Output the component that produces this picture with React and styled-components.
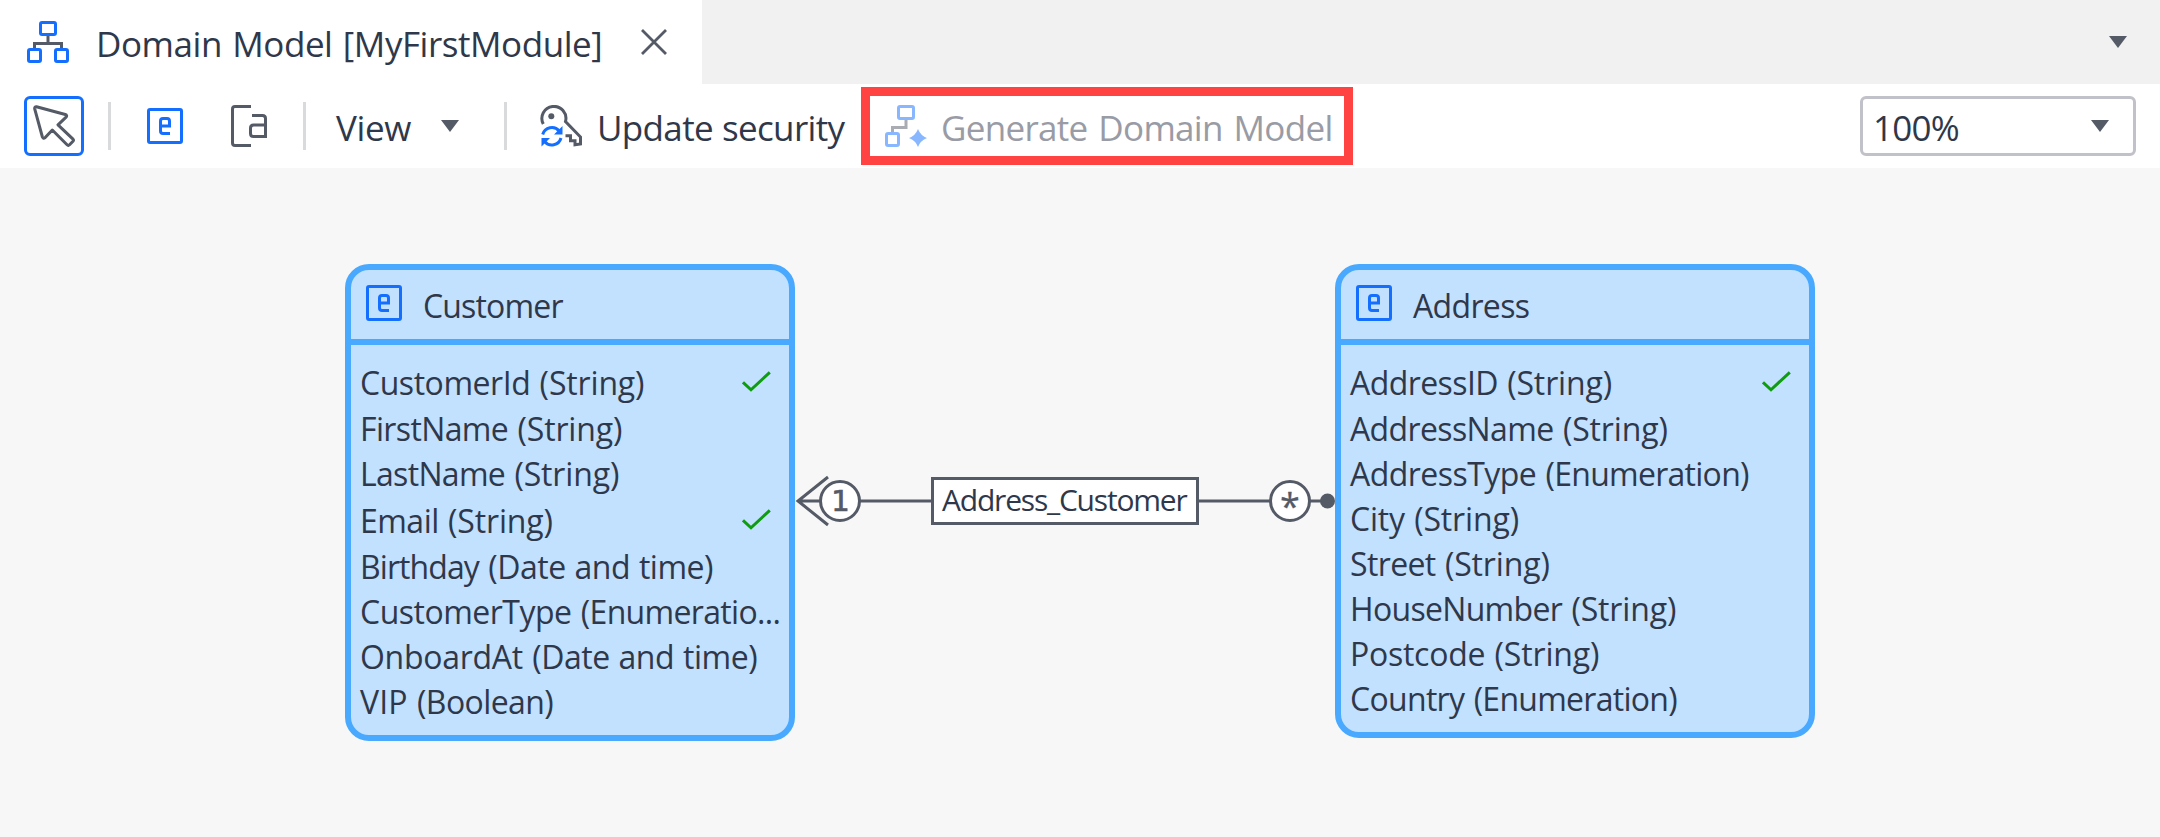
import React from "react";
import styled, { createGlobalStyle } from "styled-components";

const BLUE = "#146fff";
const INK = "#2f384a";
const GRAY = "#545a66";

const Global = createGlobalStyle`
  body { margin: 0; background: #f7f7f7; }
  * { box-sizing: border-box; }
`;

const Page = styled.div`
  display: flex;
  flex-direction: column;
  width: 2160px;
  height: 837px;
  overflow: hidden;
  font-family: "Open Sans", "Noto Sans", sans-serif;
  color: ${INK};
`;

const TabStrip = styled.header`
  display: flex;
  justify-content: space-between;
  align-items: center;
  height: 84px;
  padding-right: 33px;
  background: #f1f1f1;
`;

const Tab = styled.div`
  display: flex;
  align-items: center;
  width: 702px;
  height: 84px;
  padding-left: 27px;
  background: #fff;
`;

const Label = styled.span`
  font-size: 35px;
  line-height: 48px;
  white-space: nowrap;
  letter-spacing: ${(p) => p.$tracking || 0}px;
  word-spacing: ${(p) => p.$wordGap || 0}px;
`;

const TabTitle = styled(Label)`
  width: 545px;
  margin: 3px 0 0 27px;
`;

const Toolbar = styled.div`
  display: flex;
  align-items: center;
  height: 84px;
  padding: 0 24px;
  background: #fff;
`;

const PointerButton = styled.button`
  display: flex;
  padding: 6px;
  width: 60px;
  height: 60px;
  border: 3px solid ${BLUE};
  border-radius: 6px;
  background: #fff;
`;

const Divider = styled.i`
  width: 3px;
  height: 48px;
  margin-left: ${(p) => p.$gap}px;
  background: #d9dadc;
`;

const ToolButton = styled.button`
  display: flex;
  padding: 0;
  border: 0;
  background: none;
  margin-left: ${(p) => p.$gap}px;
`;

const TextButton = styled.button`
  display: flex;
  align-items: center;
  padding: 0;
  border: 0;
  background: none;
  font-family: inherit;
  color: ${(p) => (p.disabled ? "#999ba5" : INK)};
  margin-left: ${(p) => p.$gap}px;
`;

const ButtonLabel = styled(Label)`
  margin: 3px 0 0 ${(p) => p.$gap || 0}px;
  width: ${(p) => p.$width}px;
  text-align: left;
`;

const Highlight = styled.div`
  display: flex;
  align-items: center;
  width: 492px;
  height: 78px;
  margin-left: 15px;
  border: 9px solid #ff4343;
`;

const ZoomSelect = styled.div`
  display: flex;
  align-items: center;
  justify-content: space-between;
  width: 276px;
  height: 60px;
  margin-left: auto;
  padding: 0 24px 0 10px;
  border: 3px solid #c1c1c9;
  border-radius: 6px;
`;

const Canvas = styled.main`
  position: relative;
  flex: 1;
  background: #f7f7f7;
`;

const EntityBox = styled.section`
  position: absolute;
  left: ${(p) => p.$x}px;
  top: ${(p) => p.$y}px;
  width: ${(p) => p.$width}px;
  border: 6px solid #48a9ff;
  border-radius: 24px;
  background: #c2e1ff;
`;

const EntityHeader = styled.div`
  display: flex;
  height: 75px;
  padding: 15px 0 0 15px;
  border-bottom: 6px solid #48a9ff;
`;

const EntityTitle = styled.span`
  margin: -1px 0 0 21px;
  font-size: 32px;
  line-height: 44px;
  letter-spacing: ${(p) => p.$tracking}px;
`;

const AttributeList = styled.div`
  padding: 12px 18px 12px 9px;
`;

const Attribute = styled.div`
  display: flex;
  align-items: center;
  justify-content: space-between;
  height: ${(p) => (p.$validated ? 48 : 45)}px;
  font-size: 32px;
  line-height: 44px;
  white-space: nowrap;
  word-spacing: 1px;
`;

const AttributeText = styled.span`
  margin-top: 3px;
`;

const Tracked = styled.span`
  letter-spacing: ${(p) => p.$tracking}px;
`;

const CheckMark = styled.svg`
  margin-top: 1px;
`;

const Association = styled.div`
  position: absolute;
  left: 795px;
  top: 303px;
  width: 540px;
  height: 60px;
`;

const AssociationLine = styled.svg`
  display: block;
`;

const AssociationName = styled.div`
  position: absolute;
  left: 136px;
  top: 6px;
  width: 268px;
  height: 48px;
  padding-left: 8px;
  border: 3px solid ${GRAY};
  background: #fff;
  font-size: 30px;
  line-height: 39px;
  letter-spacing: -1.2px;
`;

const Multiplicity = styled.div`
  position: absolute;
  left: ${(p) => p.$x}px;
  top: 9px;
  width: 42px;
  height: 42px;
  border: 3px solid ${GRAY};
  border-radius: 50%;
  background: #fff;
  color: ${GRAY};
  font-family: "DejaVu Sans", sans-serif;
  font-size: 29px;
  line-height: 36px;
  text-align: center;
  text-indent: 1px;
  -webkit-text-stroke: 0.7px ${GRAY};
`;

const ManyMultiplicity = styled(Multiplicity)`
  font-family: "Open Sans", sans-serif;
  font-size: 36px;
  line-height: 46px;
  text-indent: 0;
  -webkit-text-stroke: 0.3px ${GRAY};
`;

const ModelIcon = () => (
  <svg width="42" height="42" viewBox="0 0 42 42" fill="none" strokeWidth="3">
    <path d="M21 15v6M7.5 27v-4.5h27V27" stroke={GRAY} />
    <g stroke={BLUE}>
      <rect x="13.5" y="1.5" width="15" height="12" rx="1.5" />
      <rect x="1.5" y="28.5" width="12" height="12" rx="1.5" />
      <rect x="28.5" y="28.5" width="12" height="12" rx="1.5" />
    </g>
  </svg>
);

const GenerateIcon = () => (
  <svg width="42" height="42" viewBox="0 0 42 42" fill="none" strokeWidth="3">
    <path d="M21 15v7.5H7.5V27" stroke="#a9acb2" />
    <g stroke="#89b7ff">
      <rect x="13.5" y="1.5" width="15" height="12" rx="1.5" />
      <rect x="1.5" y="28.5" width="12" height="12" rx="1.5" />
    </g>
    <path d="M33 24q2.500 6.500 9 9q-6.500 2.500-9 9q-2.500-6.500-9-9q6.500-2.500 9-9z" fill="#89b7ff" />
  </svg>
);

const CloseIcon = () => (
  <svg width="26" height="26" viewBox="0 0 26 26" stroke={GRAY} strokeWidth="2.8">
    <path d="M1 1l24 24M25 1L1 25" />
  </svg>
);

const Caret = () => (
  <svg width="18" height="12" viewBox="0 0 18 12">
    <path d="M0 0h18L9 12z" fill={GRAY} />
  </svg>
);

const PointerIcon = () => (
  <svg width="42" height="42" viewBox="0 0 42 42" fill="none" stroke={GRAY} strokeWidth="3" strokeLinejoin="round">
    <path d="M3.500 1.800L32.300 9.500q2.200.8.800 2.700L25 19.800L40 34.200q.9 1 0 2L36.300 40q-1 .9-2 0L19.300 25L12 32.800q-1.800 1.200-2.600-.8L1.700 3.800q-.3-2.200 1.800-2z" />
  </svg>
);

const EntityIcon = () => (
  <svg width="36" height="36" viewBox="0 0 36 36" fill="none" stroke={BLUE} strokeWidth="3">
    <rect x="1.500" y="1.500" width="33" height="33" rx="1.500" />
    <path d="M23 25.500h-7q-2.500 0-2.500-2.500V13q0-2.500 2.500-2.500h4q2.500 0 2.500 2.500v5H13.500" />
  </svg>
);

const AnnotationIcon = () => (
  <svg width="36" height="42" viewBox="0 0 36 42" fill="none" stroke={GRAY} strokeWidth="3">
    <path d="M20 1.500H4Q1.500 1.500 1.500 4v34q0 2.500 2.500 2.500h16" />
    <path d="M21 10.500h10.500q3 0 3 3v18H22.500q-3 0-3-3v-5.500q0-3 3-3h12" />
  </svg>
);

const SecurityIcon = () => (
  <svg width="42" height="42" viewBox="0 0 42 42" fill="none" strokeWidth="3">
    <path d="M3.300 19A12 12 0 1 1 25.500 16.500L40.500 32v7l-5.500.8v-4h-4.500v-5H25.500" stroke={GRAY} />
    <circle cx="11.300" cy="11.300" r="3" fill={GRAY} />
    <path d="M2.700 29.500a9.500 9.500 0 0 1 16.500-3.500M21 33a9.500 9.500 0 0 1-16.500 3.500" stroke={BLUE} />
    <path d="M22.500 21v8.500H14zM1.500 41.500V33H10z" fill={BLUE} />
  </svg>
);

const Check = () => (
  <CheckMark width="29" height="21" viewBox="0 0 29 21" fill="none" stroke="#109c10" strokeWidth="3">
    <path d="M1 11.300l8 7.500L27.800 1.300" />
  </CheckMark>
);

const STRING = { text: "(String)", tracking: -0.15 };
const ENUMERATION = { text: "(Enumeration)", tracking: -0.73 };
const DATE_TIME = { text: "(Date and time)", tracking: -0.47 };

const CUSTOMER = [
  { name: "CustomerId", tracking: -0.46, type: STRING, validated: true },
  { name: "FirstName", tracking: -0.63, type: STRING },
  { name: "LastName", tracking: -0.69, type: STRING },
  { name: "Email", tracking: -0.52, type: STRING, validated: true },
  { name: "Birthday", tracking: -0.92, type: DATE_TIME },
  { name: "CustomerType", tracking: -0.51, type: { text: "(Enumeratio...", tracking: -0.67 } },
  { name: "OnboardAt", tracking: -0.28, type: DATE_TIME },
  { name: "VIP", tracking: 0.14, type: { text: "(Boolean)", tracking: -0.61 } },
];

const ADDRESS = [
  { name: "AddressID", tracking: -0.58, type: STRING, validated: true },
  { name: "AddressName", tracking: -0.62, type: STRING },
  { name: "AddressType", tracking: -0.54, type: ENUMERATION },
  { name: "City", tracking: -0.21, type: STRING },
  { name: "Street", tracking: -0.63, type: STRING },
  { name: "HouseNumber", tracking: -0.69, type: STRING },
  { name: "Postcode", tracking: -0.26, type: STRING },
  { name: "Country", tracking: -0.69, type: ENUMERATION },
];

const Entity = ({ x, width, name, tracking, attributes }) => (
  <EntityBox $x={x} $y={96} $width={width}>
    <EntityHeader>
      <EntityIcon />
      <EntityTitle $tracking={tracking}>{name}</EntityTitle>
    </EntityHeader>
    <AttributeList>
      {attributes.map((a) => (
        <Attribute key={a.name} $validated={a.validated}>
          <AttributeText>
            <Tracked $tracking={a.tracking}>{a.name}</Tracked>{" "}
            <Tracked $tracking={a.type.tracking}>{a.type.text}</Tracked>
          </AttributeText>
          {a.validated && <Check />}
        </Attribute>
      ))}
    </AttributeList>
  </EntityBox>
);

export default function App() {
  return (
    <Page>
      <Global />
      <TabStrip>
        <Tab>
          <ModelIcon />
          <TabTitle $tracking={-0.45} $wordGap={1.75}>Domain Model [MyFirstModule]</TabTitle>
          <CloseIcon />
        </Tab>
        <Caret />
      </TabStrip>
      <Toolbar>
        <PointerButton><PointerIcon /></PointerButton>
        <Divider $gap={24} />
        <ToolButton $gap={36}><EntityIcon /></ToolButton>
        <ToolButton $gap={48}><AnnotationIcon /></ToolButton>
        <Divider $gap={36} />
        <TextButton $gap={30}>
          <ButtonLabel $width={105} $tracking={-0.38}>View</ButtonLabel>
          <Caret />
        </TextButton>
        <Divider $gap={45} />
        <TextButton $gap={33}>
          <SecurityIcon />
          <ButtonLabel $gap={15} $width={249} $tracking={-0.66} $wordGap={0.6}>Update security</ButtonLabel>
        </TextButton>
        <Highlight>
          <TextButton $gap={15} disabled>
            <GenerateIcon />
            <ButtonLabel $gap={14} $width={395} $tracking={-0.7} $wordGap={2.45}>Generate Domain Model</ButtonLabel>
          </TextButton>
        </Highlight>
        <ZoomSelect>
          <ButtonLabel $width={100} $tracking={-0.8}>100%</ButtonLabel>
          <Caret />
        </ZoomSelect>
      </Toolbar>
      <Canvas>
        <Entity x={345} width={450} name="Customer" tracking={-0.83} attributes={CUSTOMER} />
        <Entity x={1335} width={480} name="Address" tracking={-0.66} attributes={ADDRESS} />
        <Association>
          <AssociationLine width="540" height="60" viewBox="0 0 540 60" fill="none" stroke={GRAY} strokeWidth="3">
            <path d="M3 30h530M33 6L3 30l30 24" />
            <circle cx="532.500" cy="30" r="7.500" fill={GRAY} stroke="none" />
          </AssociationLine>
          <Multiplicity $x={24}>1</Multiplicity>
          <AssociationName>Address_Customer</AssociationName>
          <ManyMultiplicity $x={474}>*</ManyMultiplicity>
        </Association>
      </Canvas>
    </Page>
  );
}
